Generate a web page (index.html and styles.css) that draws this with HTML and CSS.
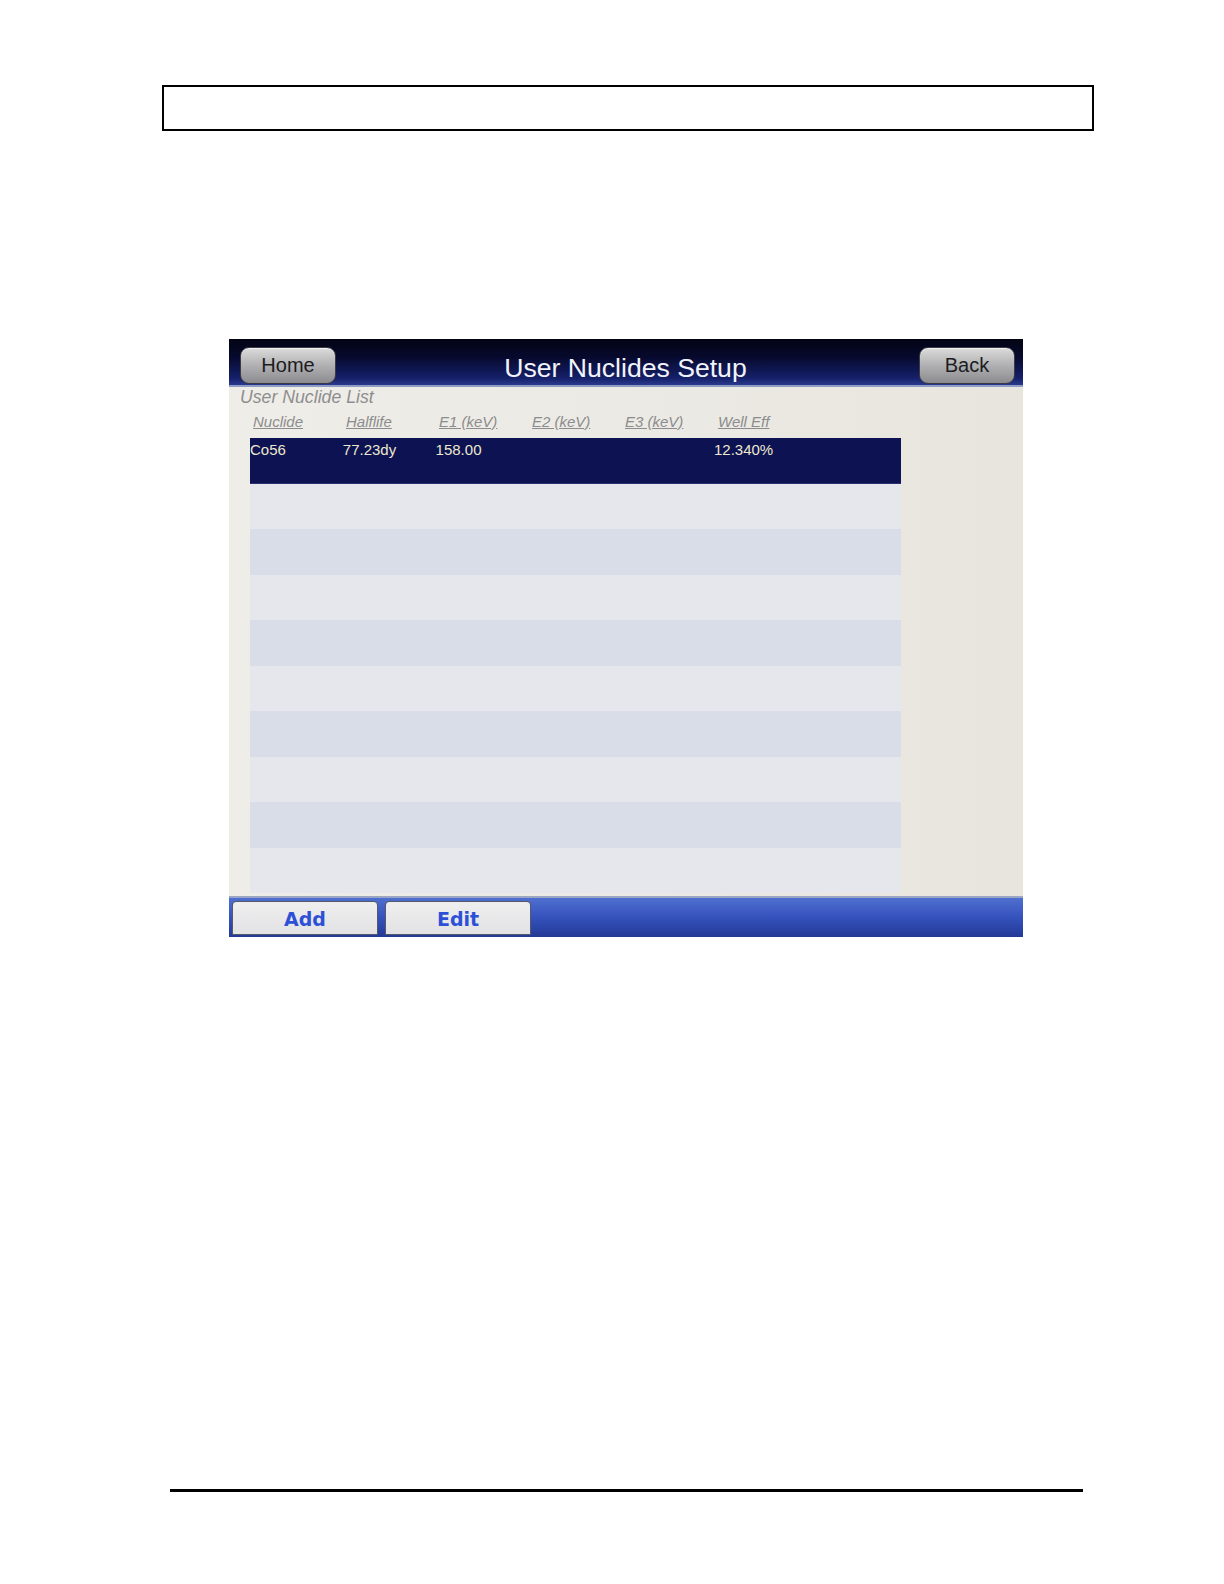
FILE: index.html
```html
<!DOCTYPE html>
<html>
<head>
<meta charset="utf-8">
<title>User Nuclides Setup</title>
<link rel="stylesheet" href="styles.css">
</head>
<body>
<div class="page">
  <div class="header-box"></div>
  <div class="screen">
    <div class="topbar">
      <div class="btn-gray">Home</div>
      <div class="title">User Nuclides Setup</div>
      <div class="btn-gray">Back</div>
    </div>
    <div class="content">
      <div class="list-label">User Nuclide List</div>
      <div class="col-heads">
        <span class="ch">Nuclide</span>
        <span class="ch">Halflife</span>
        <span class="ch">E1 (keV)</span>
        <span class="ch">E2 (keV)</span>
        <span class="ch">E3 (keV)</span>
        <span class="ch">Well Eff</span>
      </div>
      <div class="table">
        <div class="row selected">
          <span class="cell">Co56</span>
          <span class="cell">77.23dy</span>
          <span class="cell">158.00</span>
          <span class="cell"></span>
          <span class="cell"></span>
          <span class="cell">12.340%</span>
        </div>
        <div class="row light"></div>
        <div class="row dark"></div>
        <div class="row light"></div>
        <div class="row dark"></div>
        <div class="row light"></div>
        <div class="row dark"></div>
        <div class="row light"></div>
        <div class="row dark"></div>
        <div class="row light"></div>
      </div>
    </div>
    <div class="footer">
      <div class="btn-light">Add</div>
      <div class="btn-light">Edit</div>
    </div>
  </div>
  <div class="rule"></div>
</div>
</body>
</html>
```

FILE: styles.css
```css
html, body {
  margin: 0;
  padding: 0;
  background: #ffffff;
}
.page {
  width: 1224px;
  height: 1584px;
  position: relative;
  font-family: "Liberation Sans", Arial, sans-serif;
  overflow: hidden;
}
.header-box {
  margin: 85px 0 0 162px;
  width: 928px;
  height: 42px;
  border: 2px solid #000;
}
.screen {
  margin: 208px 0 0 229px;
  width: 794px;
  height: 598px;
  display: flex;
  flex-direction: column;
  background: #ebe9e3;
  overflow: hidden;
}
.topbar {
  height: 48px;
  flex: 0 0 48px;
  box-sizing: border-box;
  display: flex;
  align-items: flex-start;
  justify-content: space-between;
  padding: 8px 8px 0 11px;
  background: linear-gradient(to bottom, #020312 0%, #070a2e 40%, #15206a 85%, #2a3a8c 100%);
  border-bottom: 2px solid #8f9cc6;
}
.btn-gray {
  width: 96px;
  height: 37px;
  box-sizing: border-box;
  border-radius: 9px;
  background: linear-gradient(to bottom, #dcdcdc 0%, #b4b4b6 45%, #8c8c90 100%);
  border: 1px solid #3a3a44;
  box-shadow: inset 0 1px 0 #f2f2f2;
  color: #1c1c22;
  font-size: 20px;
  line-height: 35px;
  text-align: center;
}
.title {
  color: #f2f3fa;
  font-size: 26.6px;
  line-height: 30px;
  padding-top: 6px;
  margin-left: -4px;
}
.content {
  height: 509px;
  flex: 0 0 509px;
  box-sizing: border-box;
  padding: 0 0 0 21px;
  background: linear-gradient(to right, #efede7 0%, #ebe9e3 60%, #e8e5de 100%);
}
.list-label {
  margin-left: -10px;
  height: 20px;
  font-size: 17.7px;
  line-height: 20px;
  font-style: italic;
  color: #8e8e90;
}
.col-heads {
  height: 31px;
  box-sizing: border-box;
  padding: 0 0 3px 3px;
  display: flex;
  align-items: center;
}
.ch {
  width: 93px;
  font-size: 15px;
  font-style: italic;
  color: #8c8c8e;
  text-decoration: underline;
}
.table {
  width: 651px;
  display: flex;
  flex-direction: column;
}
.row {
  height: 45.5px;
  flex: 0 0 45.5px;
  display: flex;
}
.selected {
  background: #0d1253;
  border-bottom: 1px solid #2a2f70;
  box-sizing: border-box;
}
.cell {
  width: 92.8px;
  font-size: 15px;
  line-height: 20px;
  padding-top: 2px;
  color: #ece8cc;
}
.light {
  background: #e6e7ed;
}
.dark {
  background: #d9dde7;
}
.footer {
  height: 41px;
  flex: 0 0 41px;
  box-sizing: border-box;
  display: flex;
  gap: 7px;
  padding: 3px 0 0 3px;
  border-top: 2px solid #9aa6c4;
  background: linear-gradient(to bottom, #4f6fd0 0%, #3552bc 50%, #233996 100%);
}
.btn-light {
  width: 146px;
  height: 34px;
  box-sizing: border-box;
  border: 1px solid #55586a;
  border-radius: 4px 4px 0 0;
  background: linear-gradient(to bottom, #efeff0 0%, #e2e2e4 100%);
  color: #2d50d8;
  font-family: "DejaVu Sans", sans-serif;
  font-weight: bold;
  font-size: 19px;
  line-height: 34px;
  text-align: center;
}
.rule {
  margin: 552px 0 0 170px;
  width: 913px;
  height: 3px;
  background: #000;
}
```
